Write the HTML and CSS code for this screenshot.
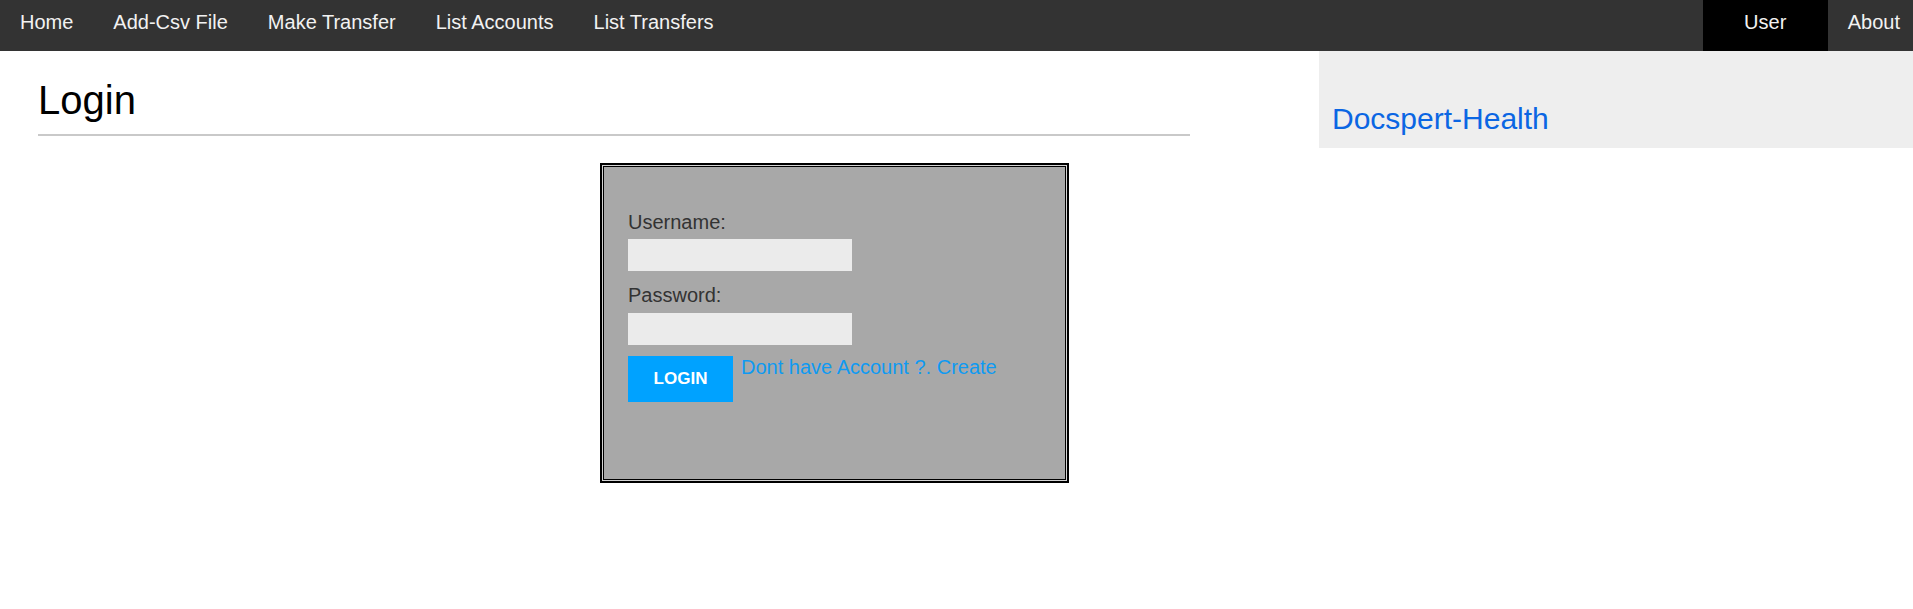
FILE: index.html
```html
<!DOCTYPE html>
<html>
<head>
<meta charset="utf-8">
<title>Login</title>
<link rel="stylesheet" href="styles.css">
</head>
<body>
<nav class="topnav">
  <a class="nav-link" href="#">Home</a>
  <a class="nav-link" href="#">Add-Csv File</a>
  <a class="nav-link" href="#">Make Transfer</a>
  <a class="nav-link" href="#">List Accounts</a>
  <a class="nav-link" href="#">List Transfers</a>
  <div class="nav-right">
    <a class="nav-link nav-user" href="#">User</a>
    <a class="nav-link nav-about" href="#">About</a>
  </div>
</nav>
<div class="page">
  <main class="main">
    <h1 class="title">Login</h1>
    <div class="login-box">
      <form class="login-form">
        <label class="field-label">Username:</label>
        <input class="field-input field-input-first" type="text">
        <label class="field-label field-label-gap">Password:</label>
        <input class="field-input" type="password">
        <div class="actions">
          <button class="login-btn" type="button">LOGIN</button>
          <a class="create-link" href="#">Dont have Account ?. Create</a>
        </div>
      </form>
    </div>
  </main>
  <aside class="sidebar">
    <h2 class="brand">Docspert-Health</h2>
  </aside>
</div>
</body>
</html>
```
FILE: styles.css
```css
html, body {
  margin: 0;
  padding: 0;
  background: #fff;
}
body {
  font-family: "Liberation Sans", Arial, sans-serif;
  font-size: 20px;
  color: #000;
}
.topnav {
  display: flex;
  background: #333;
  height: 51px;
}
.nav-link {
  display: block;
  padding: 11px 20px 17px 20px;
  line-height: 23px;
  color: #f2f2f2;
  text-decoration: none;
  font-size: 20px;
}
.nav-right {
  display: flex;
  margin-left: auto;
}
.nav-user {
  background: #000;
  width: 125px;
  padding-left: 0;
  padding-right: 0;
  text-align: center;
}
.nav-about {
  padding-right: 13px;
}
.page {
  display: flex;
  align-items: flex-start;
}
.main {
  width: 1152px;
  padding-left: 38px;
}
.title {
  font-size: 40px;
  font-weight: normal;
  line-height: 46px;
  margin: 26px 0 0 0;
  padding-bottom: 11px;
  border-bottom: 2px solid #c9c9c9;
}
.login-box {
  margin: 27px 0 0 562px;
  width: 469px;
  box-sizing: border-box;
  background: #a8a8a8;
  border: 2px solid #000;
  box-shadow: inset 0 0 0 1px #d4d4d4, inset 0 0 0 2px #000;
}
.login-form {
  padding: 46px 26px 79px 26px;
}
.field-label {
  display: block;
  line-height: 23px;
  color: #333;
}
.field-label-gap {
  margin-top: 13px;
}
.field-input {
  display: block;
  width: 224px;
  height: 32px;
  box-sizing: border-box;
  margin-top: 6px;
  border: none;
  background: #ebebeb;
  padding: 0 6px;
  font-size: 16px;
}
.field-input-first {
  margin-top: 5px;
}
.actions {
  display: flex;
  align-items: flex-start;
  gap: 8px;
  margin-top: 11px;
}
.login-btn {
  width: 105px;
  height: 46px;
  border: none;
  background: #00a2ff;
  color: #fff;
  font-family: "Liberation Sans", Arial, sans-serif;
  font-weight: bold;
  font-size: 17px;
  padding: 0;
}
.create-link {
  color: #0f9af2;
  text-decoration: none;
  line-height: 23px;
}
.sidebar {
  margin-left: auto;
  width: 594px;
  height: 97px;
  box-sizing: border-box;
  background: #eee;
  padding: 50px 0 0 13px;
}
.brand {
  margin: 0;
  font-size: 30px;
  font-weight: normal;
  color: #0b66e3;
  line-height: 35px;
}
```
